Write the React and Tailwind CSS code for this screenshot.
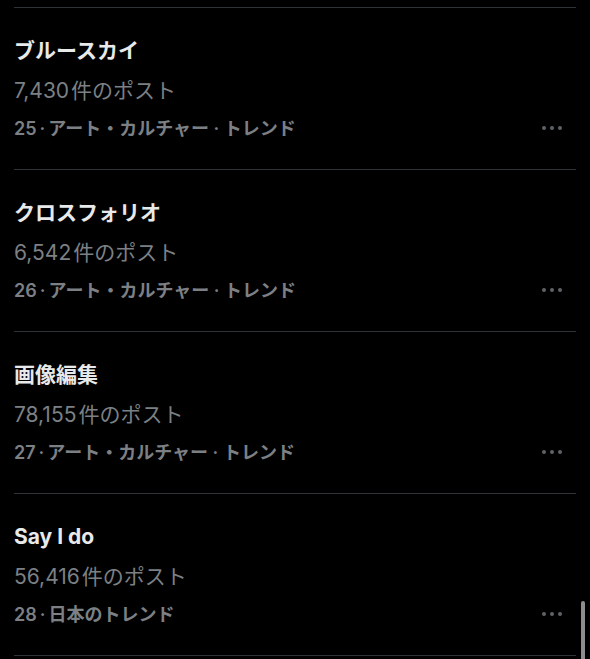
const trends = [
  { rank: 25, title: "ブルースカイ", posts: "7,430", category: "アート・カルチャー · トレンド" },
  { rank: 26, title: "クロスフォリオ", posts: "6,542", category: "アート・カルチャー · トレンド" },
  { rank: 27, title: "画像編集", posts: "78,155", category: "アート・カルチャー · トレンド" },
  { rank: 28, title: "Say I do", posts: "56,416", category: "日本のトレンド" },
];

function MoreDots() {
  return (
    <div className="flex items-center gap-[4px] mr-[14px]">
      <span className="w-[4px] h-[4px] rounded-full bg-[#5f6368]" />
      <span className="w-[4px] h-[4px] rounded-full bg-[#5f6368]" />
      <span className="w-[4px] h-[4px] rounded-full bg-[#5f6368]" />
    </div>
  );
}

export default function App() {
  return (
    <div
      className="relative w-[590px] h-[659px] overflow-hidden bg-black"
      style={{ fontFamily: '"Inter", "Noto Sans CJK JP", sans-serif' }}
    >
      <div className="pt-[7px] pl-[14px] pr-[14px]">
        {trends.map((t) => (
          <div key={t.rank} className="border-t border-[#2f3336] pt-[29px] pb-[27px]">
            <div className="h-[28px] leading-[28px] text-[21px] font-bold text-[#e7e9ea]">{t.title}</div>
            <div className="mt-[12px] h-[28px] leading-[28px] text-[21px] text-[#7c8085]">
              {t.posts}
              <span className="ml-[2px]">件のポスト</span>
            </div>
            <div className="mt-[9px] h-[28px] flex items-center justify-between">
              <span className="text-[18px] font-semibold text-[#7c8085]">
                {t.rank}
                <span className="mx-[3px]">·</span>
                {t.category}
              </span>
              <MoreDots />
            </div>
          </div>
        ))}
        <div className="border-t border-[#2f3336]" />
      </div>
      <div className="absolute left-[581px] top-[601px] w-[4px] h-[70px] rounded-full bg-[#8e8e8e]" />
    </div>
  );
}
